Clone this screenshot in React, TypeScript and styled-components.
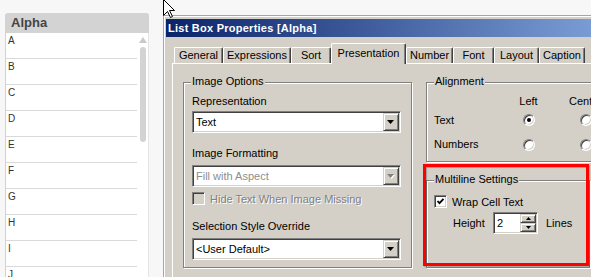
import styled, { createGlobalStyle } from "styled-components";

const GlobalStyle = createGlobalStyle`
    * { box-sizing: border-box; }
    body {
        margin: 0;
        background: #f7f7f7;
        font-family: "Liberation Sans", Arial, sans-serif;
    }
`;

const letters = ["A", "B", "C", "D", "E", "F", "G", "H", "I", "J"];

const tabs = [
    { label: "General", width: 49 },
    { label: "Expressions", width: 68 },
    { label: "Sort", width: 40 },
    { label: "Presentation", width: 75, active: true },
    { label: "Number", width: 47 },
    { label: "Font", width: 41 },
    { label: "Layout", width: 45 },
    { label: "Caption", width: 46 },
];

const DropArrow = ({ disabled }: { disabled?: boolean }) => (
    <svg width="8" height="5" viewBox="0 0 8 5">
        {disabled && <polygon points="1,1 8,1 4.5,5" fill="#fff" />}
        <polygon points="0,0 7,0 3.5,4" fill={disabled ? "#808080" : "#000"} />
    </svg>
);

const SmallArrow = ({ up }: { up?: boolean }) => (
    <svg width="5" height="3" viewBox="0 0 5 3">
        <polygon points={up ? "2.5,0 5,3 0,3" : "0,0 5,0 2.5,3"} fill="#000" />
    </svg>
);

const Check = () => (
    <svg width="9" height="9" viewBox="0 0 9 9">
        <polyline points="1.5,4 3.5,6.2 7.5,1.8" fill="none" stroke="#000" strokeWidth="1.8" />
    </svg>
);

const Combo = ({ value, disabled, top }: { value: string; disabled?: boolean; top: number }) => (
    <ComboBox $top={top}>
        <ComboText $disabled={disabled}>{value}</ComboText>
        <RaisedButton $w={16} $h={18}>
            <DropArrow disabled={disabled} />
        </RaisedButton>
    </ComboBox>
);

const App = () => {
    return (
        <>
            <GlobalStyle />
            <Screen>
                <ListBox>
                    <ListHeader>Alpha</ListHeader>
                    <ListBody>
                        <Rows>
                            {letters.map((l) => (
                                <Row key={l}>{l}</Row>
                            ))}
                        </Rows>
                        <ScrollTrack>
                            <UpArrow />
                            <Thumb />
                        </ScrollTrack>
                    </ListBody>
                </ListBox>

                <Dialog>
                    <TitleBar>List Box Properties [Alpha]</TitleBar>
                    <DialogBody>
                        <TabStrip>
                            {tabs.map((t) => (
                                <Tab key={t.label} $w={t.width} $active={!!t.active}>
                                    {t.label}
                                </Tab>
                            ))}
                        </TabStrip>
                        <TabPanel>
                            <Group $w={229} $pad="12px 10px 7px 8px">
                                <GroupTitle>Image Options</GroupTitle>
                                <FieldLabel>Representation</FieldLabel>
                                <Combo value="Text" top={3} />
                                <FieldLabel $top={14}>Image Formatting</FieldLabel>
                                <Combo value="Fill with Aspect" disabled top={5} />
                                <CheckRow $top={5}>
                                    <CheckBox $disabled />
                                    <DisabledText>Hide Text When Image Missing</DisabledText>
                                </CheckRow>
                                <FieldLabel $top={15}>Selection Style Override</FieldLabel>
                                <Combo value="<User Default>" top={5} />
                            </Group>

                            <RightColumn>
                                <Group $w={200} $pad="12px 0 4px 7px">
                                    <GroupTitle>Alignment</GroupTitle>
                                    <AlignGrid>
                                        <span />
                                        <ColHead>Left</ColHead>
                                        <ColHead>Center</ColHead>
                                        <span />
                                        <RowLabel>Text</RowLabel>
                                        <Cell><Radio $checked /></Cell>
                                        <Cell><Radio /></Cell>
                                        <span />
                                        <RowLabel>Numbers</RowLabel>
                                        <Cell><Radio /></Cell>
                                        <Cell><Radio /></Cell>
                                        <span />
                                    </AlignGrid>
                                </Group>

                                <Group $w={164} $pad="14px 0 33px 7px" $top={18}>
                                    <GroupTitle>Multiline Settings</GroupTitle>
                                    <CheckRow>
                                        <CheckBox>
                                            <Check />
                                        </CheckBox>
                                        <span>Wrap Cell Text</span>
                                    </CheckRow>
                                    <SpinRow>
                                        <HeightLabel>Height</HeightLabel>
                                        <SpinBox>
                                            <SpinValue>2</SpinValue>
                                            <SpinButtons>
                                                <RaisedButton $w={16} $h={9}>
                                                    <SmallArrow up />
                                                </RaisedButton>
                                                <RaisedButton $w={16} $h={9}>
                                                    <SmallArrow />
                                                </RaisedButton>
                                            </SpinButtons>
                                        </SpinBox>
                                        <span>Lines</span>
                                    </SpinRow>
                                    <Highlight />
                                </Group>
                            </RightColumn>
                        </TabPanel>
                    </DialogBody>
                </Dialog>

                <Cursor width="13" height="20" viewBox="0 0 13 20">
                    <polygon
                        points="0.5,0.5 0.5,16.5 4.5,12.5 7.5,18.5 9.5,17.5 6.5,11.5 11.5,11.5"
                        fill="#fff"
                        stroke="#000"
                        strokeWidth="1"
                    />
                </Cursor>
            </Screen>
        </>
    );
};

const Screen = styled.div`
    position: relative;
    display: flex;
    align-items: flex-start;
    width: 591px;
    height: 277px;
    overflow: hidden;
    background: #f7f7f7;
    font-size: 11px;
    color: #000;
`;

/* ---------- list box ---------- */

const ListBox = styled.div`
    flex-shrink: 0;
    width: 144px;
    margin: 13px 0 0 5px;
    border-radius: 3px 3px 0 0;
    overflow: hidden;
`;

const ListHeader = styled.div`
    height: 20px;
    line-height: 20px;
    padding-left: 6px;
    background: #d3d3d3;
    color: #444;
    font-size: 13px;
    font-weight: bold;
`;

const ListBody = styled.div`
    display: flex;
    height: 260px;
    background: #fff;
    border-left: 1px solid #d2d2d2;
    border-right: 1px solid #e4e4e4;
`;

const Rows = styled.div`
    width: 131px;
    display: flex;
    flex-direction: column;
`;

const Row = styled.div`
    height: 26px;
    flex-shrink: 0;
    padding: 2px 0 0 2px;
    border-bottom: 1px solid #d9d9d9;
    font-size: 10px;
    line-height: 12px;
    color: #333;
`;

const ScrollTrack = styled.div`
    width: 11px;
    display: flex;
    flex-direction: column;
    align-items: center;
    padding-top: 4px;
`;

const UpArrow = styled.div`
    width: 0;
    height: 0;
    border-left: 4px solid transparent;
    border-right: 4px solid transparent;
    border-bottom: 6px solid #c9c9c9;
`;

const Thumb = styled.div`
    width: 6px;
    height: 95px;
    margin-top: 4px;
    border-radius: 3px;
    background: #d3d3d3;
`;

/* ---------- dialog ---------- */

const Dialog = styled.div`
    flex-shrink: 0;
    width: 470px;
    height: 300px;
    margin: 15px 0 0 14px;
    padding: 3px 2px 0 2px;
    background: #d4d0c8;
    border: 1px solid #a9a69f;
    box-shadow: inset 1px 1px 0 #fff;
`;

const TitleBar = styled.div`
    height: 18px;
    line-height: 18px;
    padding-left: 2px;
    color: #fff;
    font-weight: bold;
    font-size: 11px;
    letter-spacing: 0.25px;
    background: linear-gradient(to right, #0a246a 0, #7a9cd4 426px, #a6caf0 100%);
`;

const DialogBody = styled.div`
    padding: 6px 0 0 6px;
`;

const TabStrip = styled.div`
    position: relative;
    z-index: 1;
    display: flex;
    align-items: flex-end;
    height: 21px;
    margin-bottom: -1px;
    padding-left: 2px;
`;

const Tab = styled.div<{ $w: number; $active: boolean }>`
    width: ${(p) => p.$w}px;
    height: ${(p) => (p.$active ? 21 : 16)}px;
    margin-bottom: ${(p) => (p.$active ? 0 : 1)}px;
    padding-top: ${(p) => (p.$active ? 3 : 1)}px;
    line-height: 13px;
    text-align: center;
    white-space: nowrap;
    background: #d4d0c8;
    border-top: 1px solid #fff;
    border-left: 1px solid #fff;
    border-right: 1px solid #404040;
    border-radius: 2px 2px 0 0;
    box-shadow: inset -1px 0 0 #808080;
`;

const TabPanel = styled.div`
    display: flex;
    align-items: flex-start;
    gap: 14px;
    height: 260px;
    padding: 18px 0 0 10px;
    border-top: 1px solid #fff;
    border-left: 1px solid #fff;
`;

const RightColumn = styled.div`
    display: flex;
    flex-direction: column;
`;

const Group = styled.div<{ $w: number; $pad: string; $top?: number }>`
    position: relative;
    flex-shrink: 0;
    width: ${(p) => p.$w}px;
    margin-top: ${(p) => p.$top || 0}px;
    padding: ${(p) => p.$pad};
    border: 1px solid #808080;
    box-shadow: inset 1px 1px 0 #fff, 1px 1px 0 #fff;
`;

const GroupTitle = styled.span`
    position: absolute;
    top: -8px;
    left: 7px;
    padding: 0 1px;
    line-height: 13px;
    background: #d4d0c8;
    white-space: nowrap;
`;

const FieldLabel = styled.div<{ $top?: number }>`
    height: 13px;
    line-height: 13px;
    margin-top: ${(p) => p.$top || 0}px;
`;

const ComboBox = styled.div<{ $top: number }>`
    display: flex;
    height: 22px;
    margin-top: ${(p) => p.$top}px;
    padding: 1px;
    background: #fff;
    border: 1px solid;
    border-color: #808080 #fff #fff #808080;
    box-shadow: inset 1px 1px 0 #404040, inset -1px -1px 0 #d4d0c8;
`;

const ComboText = styled.div<{ $disabled?: boolean }>`
    flex: 1;
    padding-left: 2px;
    line-height: 18px;
    color: ${(p) => (p.$disabled ? "#8d8d8d" : "#000")};
`;

const RaisedButton = styled.div<{ $w: number; $h: number }>`
    display: flex;
    align-items: center;
    justify-content: center;
    width: ${(p) => p.$w}px;
    height: ${(p) => p.$h}px;
    background: #d4d0c8;
    border: 1px solid;
    border-color: #d4d0c8 #404040 #404040 #d4d0c8;
    box-shadow: inset 1px 1px 0 #fff, inset -1px -1px 0 #808080;
`;

const CheckRow = styled.div<{ $top?: number }>`
    display: flex;
    align-items: center;
    gap: 5px;
    height: 13px;
    margin-top: ${(p) => p.$top || 0}px;
    white-space: nowrap;
`;

const CheckBox = styled.div<{ $disabled?: boolean }>`
    flex-shrink: 0;
    display: flex;
    align-items: center;
    justify-content: center;
    width: 13px;
    height: 13px;
    background: ${(p) => (p.$disabled ? "#d4d0c8" : "#fff")};
    border: 1px solid;
    border-color: #808080 #fff #fff #808080;
    box-shadow: inset 1px 1px 0 #404040, inset -1px -1px 0 #d4d0c8;
`;

const DisabledText = styled.span`
    color: #808080;
    text-shadow: 1px 1px 0 #fff;
`;

const AlignGrid = styled.div`
    display: grid;
    grid-template-columns: 66px 57px 57px 1fr;
    grid-template-rows: 13px 24px 25px;
    align-items: center;
    line-height: 13px;
`;

const ColHead = styled.div`
    text-align: center;
    align-self: start;
    white-space: nowrap;
`;

const RowLabel = styled.div``;

const Cell = styled.div`
    display: flex;
    justify-content: center;
`;

const Radio = styled.div<{ $checked?: boolean }>`
    position: relative;
    width: 12px;
    height: 12px;
    border-radius: 50%;
    background: #fff;
    border: 1px solid;
    border-color: #808080 #fff #fff #808080;
    box-shadow: inset 1px 1px 0 #404040, inset -1px -1px 0 #d4d0c8;

    &::after {
        content: "";
        display: ${(p) => (p.$checked ? "block" : "none")};
        position: absolute;
        left: 3px;
        top: 3px;
        width: 4px;
        height: 4px;
        border-radius: 50%;
        background: #000;
    }
`;

const SpinRow = styled.div`
    display: flex;
    align-items: center;
    margin-top: 4px;
    padding-left: 19px;
    white-space: nowrap;
`;

const HeightLabel = styled.span`
    width: 40px;
`;

const SpinBox = styled.div`
    display: flex;
    width: 45px;
    height: 22px;
    margin-right: 8px;
    padding: 1px;
    background: #fff;
    border: 1px solid;
    border-color: #808080 #fff #fff #808080;
    box-shadow: inset 1px 1px 0 #404040, inset -1px -1px 0 #d4d0c8;
`;

const SpinValue = styled.div`
    flex: 1;
    padding-left: 2px;
    line-height: 18px;
`;

const SpinButtons = styled.div`
    display: flex;
    flex-direction: column;
`;

const Highlight = styled.div`
    position: absolute;
    left: -4px;
    top: -17px;
    width: 166px;
    height: 102px;
    border: 3px solid #f00;
    box-shadow: inset 1px 1px 1px rgba(0, 0, 0, 0.25), 1px 1px 1px rgba(0, 0, 0, 0.2);
    pointer-events: none;
`;

const Cursor = styled.svg`
    position: absolute;
    left: 163px;
    top: -1px;
`;

export default App;
